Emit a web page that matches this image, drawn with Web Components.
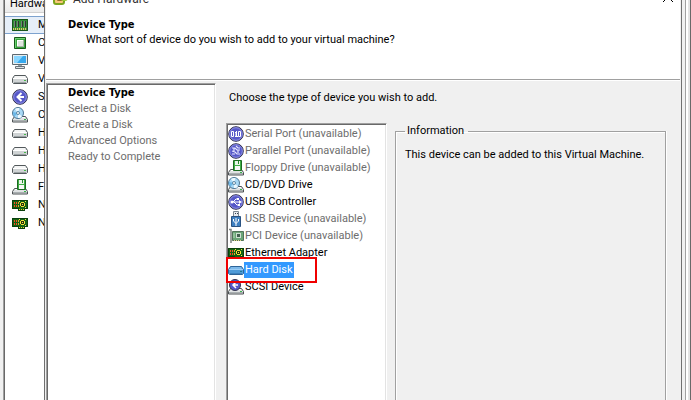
<!DOCTYPE html>
<html lang="en">
<head>
<meta charset="utf-8">
<title>Add Hardware</title>
<style>
  html, body {
    height: 100%;
    margin: 0;
    overflow: hidden;
  }
  body {
    --bold-font: "DejaVu Sans Condensed", "DejaVu Sans", sans-serif;
    font: 11px/16px Roboto, "Liberation Sans", sans-serif;
    color: #000;
    background: #f0f0f0;
  }
</style>
</head>
<body>
<settings-window>
  <hardware-summary slot="summary"></hardware-summary>
  <wizard-dialog heading="Add Hardware" step="Device Type" hint="What sort of device do you wish to add to your virtual machine?">
    <wizard-steps slot="steps"></wizard-steps>
    <device-list label="Choose the type of device you wish to add."></device-list>
    <info-group heading="Information">This device can be added to this Virtual Machine.</info-group>
  </wizard-dialog>
</settings-window>

<script>
const disc = (art) => `
  <circle cx="8" cy="8" r="7.300" fill="#5658c8" stroke="#34344c"/>
  <circle cx="8" cy="8" r="6.300" fill="none" stroke="#8f91e6"/>${art}`;

const drive = `
  <path d="M2.500 9.500h11l2 3v2.500H.5v-2.500z" fill="#dfe2e3" stroke="#4b5053"/>
  <path d="M3 10.500h10" stroke="#fff"/><path d="M1 13.500h14" stroke="#a9afb1"/><path d="M12 12.500h2" stroke="#39b54a"/>`;

const nic = `
  <path d="M0 3h16v9h-3v2H6v-2H0z" fill="#146414"/>
  <path d="M.5 3.500h15v8h-3v2h-6v-2h-6z" fill="none" stroke="#0a3f0c"/>
  <path d="M2 5h1v2H2zM4 5h1v2H4zM2 8h1v2H2zM4 8h1v2H4z" fill="#ff4a22"/>
  <path d="M6 5h1v2H6zM6 8h1v2H6z" fill="#e8a52a"/>
  <path d="M9 5h3v1h1v3h-1v1H9V9H8V6h1z" fill="#f4e23b"/><path d="M9 6h3v3H9z" fill="#23350c"/>
  <path d="M10 7h1v1h-1zM13 4h1v1h-1zM13 10h1v1h-1zM7 4h1v1H7z" fill="#f7e64d"/>
  <path d="M7 12h1v1H7zM9 12h1v1H9zM11 12h1v1h-1z" fill="#e6d33c"/>`;

const ICONS = {
  memory: `
    <path d="M0 2h16v12H0z" fill="#2f8f33"/><path d="M.5 2.500h15v11H.5z" fill="none" stroke="#17561b"/>
    <path d="M2 4h2v6H2zM5 4h2v6H5zM9 4h2v6H9zM12 4h2v6h-2z" fill="#2c3a30"/>
    <path d="M2 4h1v6H2zM5 4h1v6H5zM9 4h1v6H9zM12 4h1v6h-1z" fill="#6f8a74"/>
    <path d="M1 11h14v2H1z" fill="#4b8b3a"/>
    <path d="M1 12h14" stroke="#d9cf62" stroke-width="2" stroke-dasharray="1 1"/>`,
  cpu: `
    <path d="M2.500 2.500h11v11h-11z" fill="#36a23c" stroke="#155a19"/>
    <path d="M3 3.500h10M3.500 3v10" stroke="#6fd073"/>
    <path d="M5 5h7v7H5z" fill="#dfe5df"/><path d="M5 5h6v1H5zM5 5h1v6H5z" fill="#fff"/>
    <path d="M5 11h7v1H5zM11 5h1v7h-1z" fill="#a7b3a7"/>`,
  monitor: `
    <path d="M.5 1.500h15v10H.5z" fill="#e7edf0" stroke="#5d6971"/>
    <path d="M2 3h12v7H2z" fill="#38a9ee"/><path d="M2 3h9l-6 7H2z" fill="#89d6ff"/>
    <path d="M6 12h4v2H6z" fill="#98a1a6"/><path d="M3.500 13.500h9v2h-9z" fill="#dee3e6" stroke="#6a737a"/>`,
  disk: `
    <path d="M2.500 4.500h11l2 3v4l-1 1h-13l-1-1v-4z" fill="#cfd3d4" stroke="#52585b"/>
    <path d="M3 5h10l1 2H2z" fill="#f4f5f5"/><path d="M1 7.500h14" stroke="#fff"/>
    <path d="M2 11.500h12" stroke="#9ba2a4"/><path d="M12 9.500h2" stroke="#43b649"/>`,
  diskSelected: `
    <path d="M2.500 4.500h11l2 3v4l-1 1h-13l-1-1v-4z" fill="#4f9bd8" stroke="#2d6499"/>
    <path d="M3 5h10l1 2H2z" fill="#7db9ea"/><path d="M1 7.500h14" stroke="#9ccdf5"/>
    <path d="M2 11.500h12" stroke="#3c80bb"/><path d="M12 9.500h2" stroke="#1d7892"/>`,
  scsi: disc('<path d="M9.500 4 5.500 8l4 4M6 8h6" fill="none" stroke="#fff" stroke-width="2"/>'),
  cd: `${drive}
    <circle cx="6" cy="6" r="5.500" fill="#a8d8f5" stroke="#4c7694"/>
    <path d="M6 6 3 2q2-1.500 4.500-1zM6 6l4 3.500q-1.500 2-4 1.500z" fill="#edf9ff"/>
    <path d="M6 6 1 5q0 3 1.500 4.500z" fill="#6ab7e8"/>
    <circle cx="6" cy="6" r="1.500" fill="#fff" stroke="#5a86a3"/>`,
  floppy: `${drive}
    <path d="M5.500.5h8v10h-8z" fill="#3fae45" stroke="#1c6a22"/>
    <path d="M7 1h5v4H7z" fill="#eaf5ea"/><path d="M7 6h5v4H7z" fill="#f8f8f8"/><path d="M10.500 1v3" stroke="#278b2e"/>`,
  nic,
  serial: disc(`
    <path d="M3.500 5.500h2v5h-2zM10.500 5.500h2v5h-2z" fill="none" stroke="#fff"/>
    <path d="M7 6.500h1V10M7 10.500h3M8.500 5v5" fill="none" stroke="#fff"/>`),
  parallel: disc('<path d="M4 5h3l2 2h3M4 8l3 1 2 2h3M8 3l2 2h2M4 11h3M6 5v3M10 7v3" fill="none" stroke="#e6e6ff" stroke-width="1.200"/>'),
  usb: disc(`
    <path d="M4 8h8M5 8l3-3h2M6 8l3 3h2" fill="none" stroke="#fff"/>
    <circle cx="4" cy="8" r="1.500" fill="#fff"/><path d="m11 6 3 2-3 2zM9 4h2v2H9zM10 10h2v2h-2z" fill="#fff"/>`),
  usbStick: `
    <path d="M5.500.5h5v5h-5z" fill="#e6eaee" stroke="#7b8791"/><path d="M7 2h1v1H7zM9 2h1v1H9z" fill="#394552"/>
    <path d="M3.500 5.500h9v10h-9z" fill="#3d7fc0" stroke="#2a5280"/>
    <path d="M8 7v8M5.500 8v2L8 12.500l2.500-2.500V8" fill="none" stroke="#fff"/>`,
  pci: `
    <path d="M1 1.500h2V15" fill="none" stroke="#7d8581" stroke-width="1.500"/>
    <path d="M4.500 3.500h11v9h-11z" fill="#6ba577" stroke="#52745a"/>
    <path d="M8 5h5v5H8z" fill="#cfe0d2"/><path d="M9 6h3v3H9z" fill="#436150"/><path d="M6 5v5" stroke="#b7e0be"/>
    <path d="M6 12.500h8" stroke="#e0d58a" stroke-dasharray="1 1"/>`,
  scsiDevice: `${drive}
    <circle cx="7" cy="6" r="5.500" fill="#5658c8" stroke="#34344c"/>
    <path d="M8 3 5 6l3 3M5 6h5" fill="none" stroke="#fff" stroke-width="1.500"/>`,
  vm: `
    <rect x="2" y="3" width="10" height="12" rx="2" fill="#f7c779" stroke="#7da51e" stroke-width="2"/>
    <rect x="6" y="1" width="9" height="10" rx="2" fill="none" stroke="#9ac836" stroke-width="2"/>
    <path d="M5.500 8.500h4v3h-4z" fill="#fff" stroke="#9b6b24"/>`
};

class HwIcon extends HTMLElement {
  constructor() {
    super();
    this.attachShadow({ mode: 'open' });
  }

  connectedCallback() {
    this.shadowRoot.innerHTML = `
      <style>
        :host { display: block; flex: none; width: 16px; height: 16px; }
        svg { display: block; width: 100%; height: 100%; }
      </style>
      <svg viewBox="0 0 16 16" aria-hidden="true">${ICONS[this.getAttribute('name')] || ''}</svg>
    `;
  }
}

/* Settings window that stays visible behind the wizard */
class SettingsWindow extends HTMLElement {
  constructor() {
    super();
    this.attachShadow({ mode: 'open' });
    this.shadowRoot.innerHTML = `
      <style>
        :host { display: flex; height: 100vh; }
        .summary {
          flex: none;
          box-sizing: border-box;
          width: 44px;
          padding-left: 3px;
          overflow: hidden;
        }
        .edge {
          flex: none;
          box-sizing: border-box;
          width: 9px;
          border-right: 1px solid #696969;
          display: flex;
          justify-content: flex-end;
        }
        .edge::before {
          content: "";
          width: 4px;
          border-left: 1px solid #a0a0a0;
          background: linear-gradient(90deg, #fff 2px, #e3e3e3 2px);
        }
      </style>
      <div class="summary"><slot name="summary"></slot></div>
      <slot></slot>
      <div class="edge"></div>
    `;
  }
}

class HardwareSummary extends HTMLElement {
  constructor() {
    super();
    this.attachShadow({ mode: 'open' });
  }

  connectedCallback() {
    const rows = [
      ['memory', 'Memory'],
      ['cpu', 'CPUs'],
      ['monitor', 'Video card'],
      ['disk', 'VMCI device'],
      ['scsi', 'SCSI controller 0'],
      ['cd', 'CD/DVD drive 1'],
      ['disk', 'Hard disk 1'],
      ['disk', 'Hard disk 2'],
      ['disk', 'Hard disk 3'],
      ['floppy', 'Floppy drive 1'],
      ['nic', 'Network adapter 1'],
      ['nic', 'Network adapter 2']
    ];

    this.shadowRoot.innerHTML = `
      <style>
        :host {
          display: block;
          height: 100%;
          box-sizing: border-box;
          border-left: 1px solid #a0a0a0;
          box-shadow: inset 1px 0 #696969;
          padding-left: 1px;
          background: #fff;
          overflow: hidden;
          white-space: nowrap;
        }
        .head {
          height: 13px;
          box-sizing: border-box;
          display: flex;
          align-items: flex-end;
          padding-left: 5px;
          background: linear-gradient(#f7f7f7, #ebebeb);
          border-bottom: 1px solid #d0d0d0;
        }
        ul { list-style: none; margin: 3px 0 0; padding: 0; }
        li {
          box-sizing: border-box;
          display: flex;
          align-items: center;
          gap: 10px;
          height: 18px;
          padding-left: 7px;
        }
        li.current {
          background: #e6eef8;
          box-shadow: inset 0 1px #7da2ce, inset 0 -1px #7da2ce;
        }
      </style>
      <div class="head">Hardware</div>
      <ul>
        ${rows.map(([icon, text], i) => `
          <li class="${i === 0 ? 'current' : ''}"><hw-icon name="${icon}"></hw-icon><span>${text.charAt(0)}</span></li>`).join('')}
      </ul>
    `;
  }
}

class WizardDialog extends HTMLElement {
  constructor() {
    super();
    this.attachShadow({ mode: 'open' });
  }

  connectedCallback() {
    this.shadowRoot.innerHTML = `
      <style>
        :host {
          display: flex;
          flex: 1;
          flex-direction: column;
          min-width: 0;
          box-sizing: border-box;
          border: solid #707070;
          border-width: 0 1px;
          padding: 0 1px;
          background: #f0f0f0;
        }
        .title {
          display: flex;
          align-items: flex-end;
          height: 7px;
          padding: 0 6px;
          background: #fff;
          overflow: hidden;
        }
        .title hw-icon { margin-bottom: 2px; }
        .title span { flex: 1; padding-left: 5px; font-size: 12px; color: #333; }
        .title button {
          width: 12px;
          height: 12px;
          margin-bottom: 4px;
          padding: 0;
          border: 0;
          background: none;
        }
        .title svg { display: block; }
        header {
          padding: 10px 22px 32px;
          background: #fff;
          border-bottom: 1px solid #a0a0a0;
          box-shadow: 0 1px #fff;
        }
        h1 { margin: 0; font: bold 11px/16px var(--bold-font); }
        p { margin: 0; padding-left: 18px; line-height: 14px; }
        .content { flex: 1; display: flex; min-height: 0; margin-top: 3px; }
        main {
          flex: 1;
          display: grid;
          grid-template: auto 1fr / 161px 1fr;
          column-gap: 8px;
          padding: 0 14px 0 10px;
          min-width: 0;
        }
      </style>
      <div class="title">
        <hw-icon name="vm"></hw-icon>
        <span>${this.getAttribute('heading')}</span>
        <button aria-label="Close">
          <svg width="12" height="12" viewBox="0 0 12 12"><path d="m1 1 10 10M11 1 1 11" stroke="#000"/></svg>
        </button>
      </div>
      <header>
        <h1>${this.getAttribute('step')}</h1>
        <p>${this.getAttribute('hint')}</p>
      </header>
      <div class="content">
        <slot name="steps"></slot>
        <main><slot></slot></main>
      </div>
    `;
  }
}

class WizardSteps extends HTMLElement {
  constructor() {
    super();
    this.attachShadow({ mode: 'open' });
  }

  connectedCallback() {
    const steps = ['Device Type', 'Select a Disk', 'Create a Disk', 'Advanced Options', 'Ready to Complete'];

    this.shadowRoot.innerHTML = `
      <style>
        :host {
          display: block;
          flex: none;
          box-sizing: border-box;
          width: 170px;
          border: solid #a0a0a0;
          border-width: 1px 1px 0;
          border-right-color: #fff;
          box-shadow: inset 1px 1px #696969, inset -1px 0 #e3e3e3;
          background: #fff;
        }
        ol { list-style: none; margin: 0; padding: 1px 0 0 21px; color: #6d6d6d; }
        li { height: 16px; }
        li[aria-current] { font: bold 11px/16px var(--bold-font); color: #000; }
      </style>
      <ol>
        ${steps.map((s, i) => `<li${i === 0 ? ' aria-current="step"' : ''}>${s}</li>`).join('')}
      </ol>
    `;
  }
}

class DeviceList extends HTMLElement {
  constructor() {
    super();
    this.attachShadow({ mode: 'open' });
  }

  connectedCallback() {
    const devices = [
      ['serial', 'Serial Port', false],
      ['parallel', 'Parallel Port', false],
      ['floppy', 'Floppy Drive', false],
      ['cd', 'CD/DVD Drive', true],
      ['usb', 'USB Controller', true],
      ['usbStick', 'USB Device', false],
      ['pci', 'PCI Device', false],
      ['nic', 'Ethernet Adapter', true],
      ['diskSelected', 'Hard Disk', true],
      ['scsiDevice', 'SCSI Device', true]
    ];

    this.shadowRoot.innerHTML = `
      <style>
        :host { display: contents; }
        .label {
          grid-column: 1 / -1;
          padding: 7px 3px 17px;
        }
        .box {
          box-sizing: border-box;
          border: solid #a0a0a0;
          border-width: 1px 1px 0;
          border-right-color: #fff;
          box-shadow: inset 1px 1px #696969, inset -1px 0 #e3e3e3;
          padding: 1px;
          background: #fff;
        }
        button {
          display: flex;
          align-items: center;
          width: 100%;
          height: 17px;
          margin: 0;
          padding: 0;
          border: 0;
          background: none;
          font: inherit;
          color: inherit;
          text-align: left;
          white-space: nowrap;
        }
        button span { padding: 0 1px; line-height: 16px; }
        button:disabled { color: #6d6d6d; }
        button[aria-selected="true"] span { background: #3399ff; color: #fff; }
        .marked { position: relative; }
        .marked::after {
          content: "";
          position: absolute;
          top: -4px;
          left: -2px;
          box-sizing: border-box;
          width: 91px;
          height: 26px;
          border: 2px solid #f00000;
          pointer-events: none;
          z-index: 1;
        }
      </style>
      <div class="label" id="label">${this.getAttribute('label')}</div>
      <div class="box" role="listbox" aria-labelledby="label">
        ${devices.map(([icon, text, free]) => {
          const picked = text === 'Hard Disk';
          return `<button role="option" aria-selected="${picked}"${picked ? ' class="marked"' : ''}${free ? '' : ' disabled'}>
            <hw-icon name="${icon}"></hw-icon><span>${text}${free ? '' : ' (unavailable)'}</span></button>`;
        }).join('')}
      </div>
    `;
  }
}

class InfoGroup extends HTMLElement {
  constructor() {
    super();
    this.attachShadow({ mode: 'open' });
  }

  connectedCallback() {
    this.shadowRoot.innerHTML = `
      <style>
        :host { display: flex; min-width: 0; }
        fieldset {
          flex: 1;
          min-width: 0;
          margin: 0;
          padding: 8px 9px;
          border: solid #a0a0a0;
          border-width: 1px 1px 0;
          box-shadow: 1px 0 #fff, inset 1px 1px #fff;
        }
        legend { padding: 0 4px 0 2px; }
      </style>
      <fieldset>
        <legend>${this.getAttribute('heading')}</legend>
        <slot></slot>
      </fieldset>
    `;
  }
}

customElements.define('hw-icon', HwIcon);
customElements.define('settings-window', SettingsWindow);
customElements.define('hardware-summary', HardwareSummary);
customElements.define('wizard-dialog', WizardDialog);
customElements.define('wizard-steps', WizardSteps);
customElements.define('device-list', DeviceList);
customElements.define('info-group', InfoGroup);
</script>
</body>
</html>
